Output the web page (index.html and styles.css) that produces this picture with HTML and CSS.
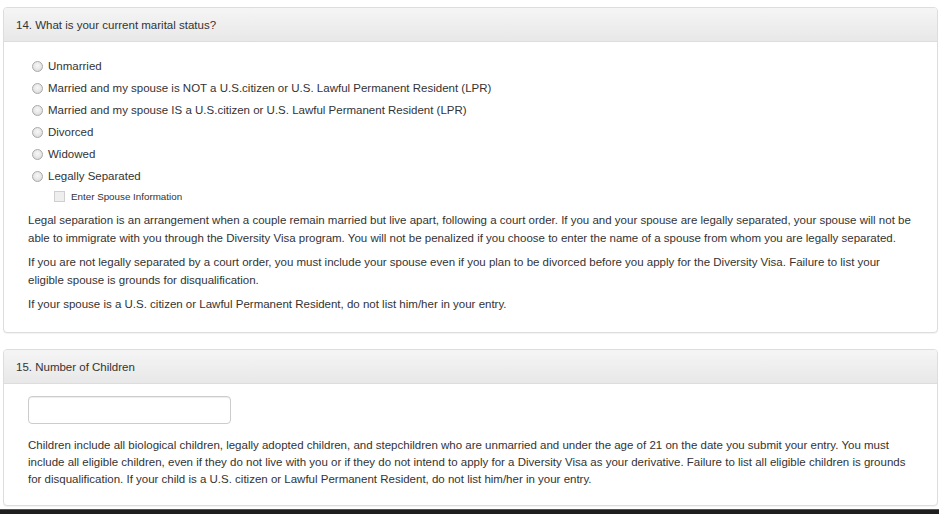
FILE: index.html
```html
<html>
<head>
<title>Marital Status and Children</title>
<link rel="stylesheet" href="styles.css">
<meta http-equiv="Content-Type" content="text/html; charset=UTF-8">
</head>
<body>
<div class="page">

  <div class="panel panel-first">
    <div class="panel-heading">14. What is your current marital status?</div>
    <div class="panel-body">
      <div class="radio-list">
        <label class="radio-row"><span class="radio-dot"></span>Unmarried</label>
        <label class="radio-row"><span class="radio-dot"></span>Married and my spouse is NOT a U.S.citizen or U.S. Lawful Permanent Resident (LPR)</label>
        <label class="radio-row"><span class="radio-dot"></span>Married and my spouse IS a U.S.citizen or U.S. Lawful Permanent Resident (LPR)</label>
        <label class="radio-row"><span class="radio-dot"></span>Divorced</label>
        <label class="radio-row"><span class="radio-dot"></span>Widowed</label>
        <label class="radio-row"><span class="radio-dot"></span>Legally Separated</label>
        <label class="check-row"><span class="check-box"></span>Enter Spouse Information</label>
      </div>
      <p class="note">Legal separation is an arrangement when a couple remain married but live apart, following a court order. If you and your spouse are legally separated, your spouse will not be able to immigrate with you through the Diversity Visa program. You will not be penalized if you choose to enter the name of a spouse from whom you are legally separated.</p>
      <p class="note">If you are not legally separated by a court order, you must include your spouse even if you plan to be divorced before you apply for the Diversity Visa. Failure to list your eligible spouse is grounds for disqualification.</p>
      <p class="note">If your spouse is a U.S. citizen or Lawful Permanent Resident, do not list him/her in your entry.</p>
    </div>
  </div>

  <div class="panel panel-second">
    <div class="panel-heading">15. Number of Children</div>
    <div class="panel-body panel-body-children">
      <input class="text-input" type="text">
      <p class="note note-tight">Children include all biological children, legally adopted children, and stepchildren who are unmarried and under the age of 21 on the date you submit your entry. You must include all eligible children, even if they do not live with you or if they do not intend to apply for a Diversity Visa as your derivative. Failure to list all eligible children is grounds for disqualification. If your child is a U.S. citizen or Lawful Permanent Resident, do not list him/her in your entry.</p>
    </div>
  </div>

</div>
<div class="taskbar"></div>
</body>
</html>
```

FILE: styles.css
```css
html, body {
 margin: 0;
 padding: 0;
 background-color: #ffffff;
 overflow: hidden;
}
body {
 width: 939px;
 height: 514px;
 font-family: "Liberation Sans", Arial, Helvetica, sans-serif;
 font-size: 11.5px;
 color: #333333;
 display: flex;
 flex-direction: column;
}
.page {
 flex: 1;
 min-height: 0;
 overflow: hidden;
 padding-top: 7px;
 padding-left: 3px;
}
.panel {
 width: 935px;
 box-sizing: border-box;
 border: 1px solid #dddddd;
 border-radius: 4px;
 background-color: #ffffff;
 box-shadow: 0 1px 1px rgba(0,0,0,0.05);
}
.panel-first {
 margin-bottom: 16px;
}
.panel-heading {
 height: 34px;
 box-sizing: border-box;
 padding: 0 12px;
 line-height: 34px;
 border-bottom: 1px solid #dddddd;
 border-top-left-radius: 3px;
 border-top-right-radius: 3px;
 background: linear-gradient(#f5f5f5, #e8e8e8);
}
.panel-body {
 padding: 13px 24px 19px 24px;
}
.panel-body-children {
 padding-top: 12px;
 padding-bottom: 17px;
}
.radio-list {
 display: flex;
 flex-direction: column;
 padding-left: 4px;
}
.radio-row {
 display: flex;
 align-items: center;
 height: 22px;
}
.radio-dot {
 width: 9px;
 height: 9px;
 margin-right: 5px;
 border-radius: 50%;
 border: 1px solid #a9a9a9;
 background: radial-gradient(circle at 50% 40%, #f7f7f7 0%, #e6e6e6 55%, #cfcfcf 100%);
}
.check-row {
 display: flex;
 align-items: center;
 height: 18px;
 padding-left: 22px;
 font-size: 9.8px;
}
.check-box {
 width: 9px;
 height: 9px;
 margin-right: 6px;
 border: 1px solid #cfcfcf;
 background-color: #eeeeee;
}
.note {
 margin: 6px 0 0 0;
 line-height: 18px;
}
.note-tight {
 margin-top: 13px;
 line-height: 17px;
}
.text-input {
 display: block;
 width: 203px;
 height: 28px;
 box-sizing: border-box;
 margin: 0;
 border: 1px solid #cccccc;
 border-radius: 4px;
 box-shadow: inset 0 1px 1px rgba(0,0,0,0.075);
 background-color: #ffffff;
}
.taskbar {
 height: 4px;
 flex-shrink: 0;
 background-color: #1f1f1f;
 border-top: 1px solid #555555;
}
```
